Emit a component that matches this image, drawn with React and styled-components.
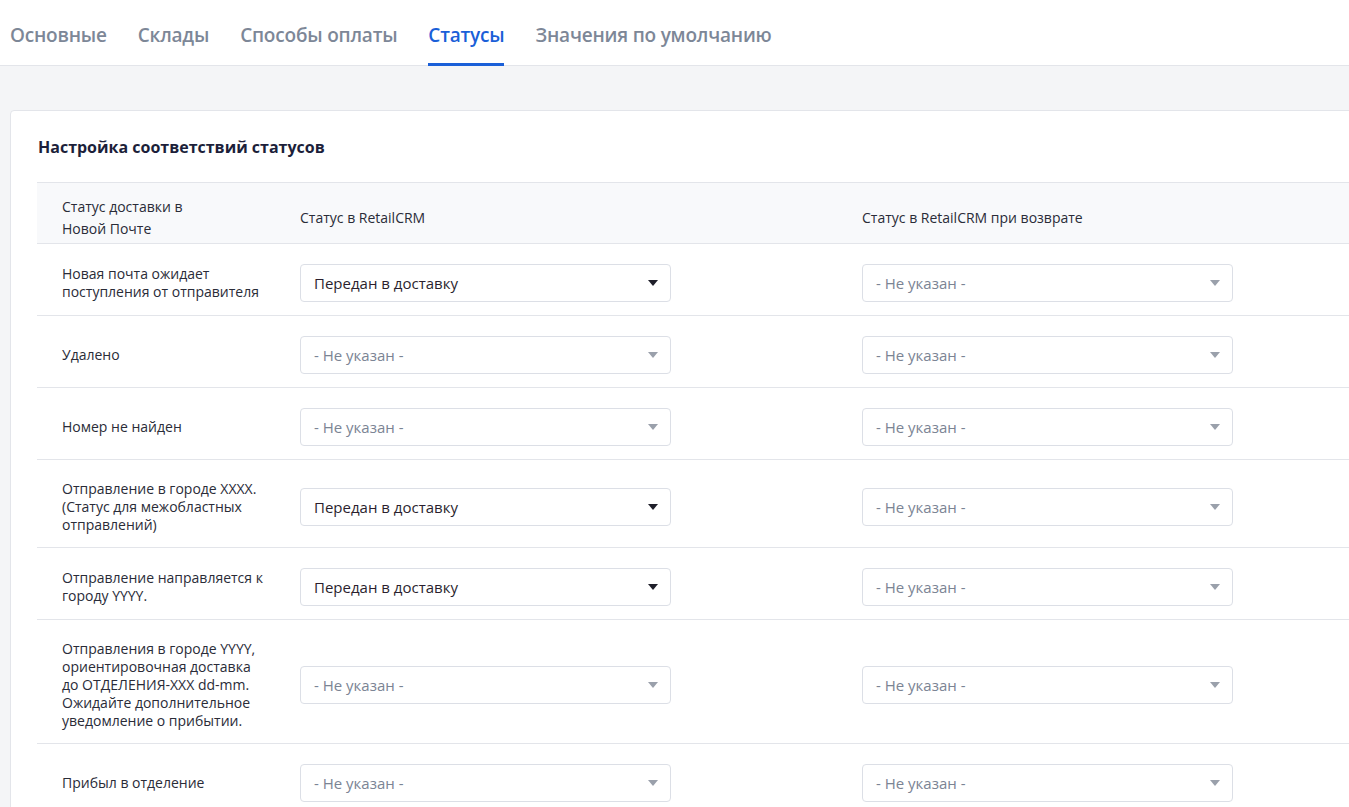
import React from "react";
import styled, { createGlobalStyle } from "styled-components";

const Global = createGlobalStyle`
  html, body { margin: 0; padding: 0; background: #f4f5f7; overflow: hidden; }
  body { font-family: "Open Sans", "Noto Sans", sans-serif; }
  * { box-sizing: border-box; }
`;

const Page = styled.div`
  width: 1349px;
  height: 807px;
  overflow: hidden;
  background: #f4f5f7;
`;

const TabBar = styled.nav`
  display: flex;
  gap: 31px;
  height: 66px;
  padding: 0 10px;
  background: #fff;
  border-bottom: 1px solid #e3e5ea;
`;

const Tab = styled.a`
  display: flex;
  align-items: center;
  padding-top: 6px;
  font-size: 19px;
  font-weight: 600;
  letter-spacing: -0.2px;
  color: ${(p) => (p.$active ? "#1a5fd8" : "#7d8797")};
  border-bottom: 3px solid ${(p) => (p.$active ? "#1a5fd8" : "transparent")};
  margin-bottom: -1px;
  cursor: pointer;
  white-space: nowrap;
`;

const Content = styled.main`
  padding: 44px 0 0 10px;
`;

const Card = styled.section`
  width: 1400px;
  background: #fff;
  border: 1px solid #e3e5ea;
  border-radius: 4px;
  padding: 25px 0 0 26px;
`;

const Title = styled.h2`
  margin: 0 0 24px 1px;
  font-size: 16px;
  line-height: 22px;
  font-weight: 700;
  color: #1c1f3a;
`;

const Table = styled.div`
  display: grid;
  grid-template-columns: 238px 562px 562px;
`;

const HeadCell = styled.div`
  display: flex;
  align-items: center;
  padding: 13px 8px 3px 25px;
  background: #f8f9fb;
  border-top: 1px solid #e3e5ea;
  border-bottom: 1px solid #e3e5ea;
  font-size: 14px;
  line-height: 22px;
  color: #2a2c38;
`;

const Cell = styled.div`
  display: flex;
  align-items: center;
  padding: 20px 8px 13px 25px;
  border-bottom: 1px solid #e3e5ea;
  font-size: 14px;
  line-height: 18px;
  color: #2a2c38;
`;

const Line = styled.div`
  white-space: nowrap;
`;

const SelectBox = styled.div`
  display: flex;
  align-items: center;
  justify-content: space-between;
  width: 371px;
  height: 38px;
  padding: 0 12px 0 13px;
  border: 1px solid #dcdfe6;
  border-radius: 4px;
  background: #fff;
  font-size: 15px;
  color: ${(p) => (p.$empty ? "#7b8494" : "#2b1f2e")};
`;

const Caret = ({ color }) => (
  <svg width="10" height="6" viewBox="0 0 10 6">
    <path d="M0 0 H10 L5 6 Z" fill={color} />
  </svg>
);

const Select = ({ value }) => {
  const empty = !value;
  return (
    <SelectBox $empty={empty}>
      <span>{value || "- Не указан -"}</span>
      <Caret color={empty ? "#9aa0ab" : "#1f1f2a"} />
    </SelectBox>
  );
};

const tabs = ["Основные", "Склады", "Способы оплаты", "Статусы", "Значения по умолчанию"];

const rows = [
  { label: ["Новая почта ожидает", "поступления от отправителя"], a: "Передан в доставку" },
  { label: ["Удалено"] },
  { label: ["Номер не найден"] },
  { label: ["Отправление в городе XXXX.", "(Статус для межобластных", "отправлений)"], a: "Передан в доставку" },
  { label: ["Отправление направляется к", "городу YYYY."], a: "Передан в доставку" },
  {
    label: [
      "Отправления в городе YYYY,",
      "ориентировочная доставка",
      "до ОТДЕЛЕНИЯ-XXX dd-mm.",
      "Ожидайте дополнительное",
      "уведомление о прибытии.",
    ],
  },
  { label: ["Прибыл в отделение"] },
];

const Lines = ({ lines }) => (
  <div>
    {lines.map((l, i) => (
      <Line key={i}>{l}</Line>
    ))}
  </div>
);

export default function App() {
  return (
    <Page>
      <Global />
      <TabBar>
        {tabs.map((t) => (
          <Tab key={t} $active={t === "Статусы"}>
            {t}
          </Tab>
        ))}
      </TabBar>
      <Content>
        <Card>
          <Title>Настройка соответствий статусов</Title>
          <Table>
            <HeadCell>
              <Lines lines={["Статус доставки в", "Новой Почте"]} />
            </HeadCell>
            <HeadCell>Статус в RetailCRM</HeadCell>
            <HeadCell>Статус в RetailCRM при возврате</HeadCell>
            {rows.map((r, i) => (
              <React.Fragment key={i}>
                <Cell>
                  <Lines lines={r.label} />
                </Cell>
                <Cell>
                  <Select value={r.a} />
                </Cell>
                <Cell>
                  <Select value={r.b} />
                </Cell>
              </React.Fragment>
            ))}
          </Table>
        </Card>
      </Content>
    </Page>
  );
}
